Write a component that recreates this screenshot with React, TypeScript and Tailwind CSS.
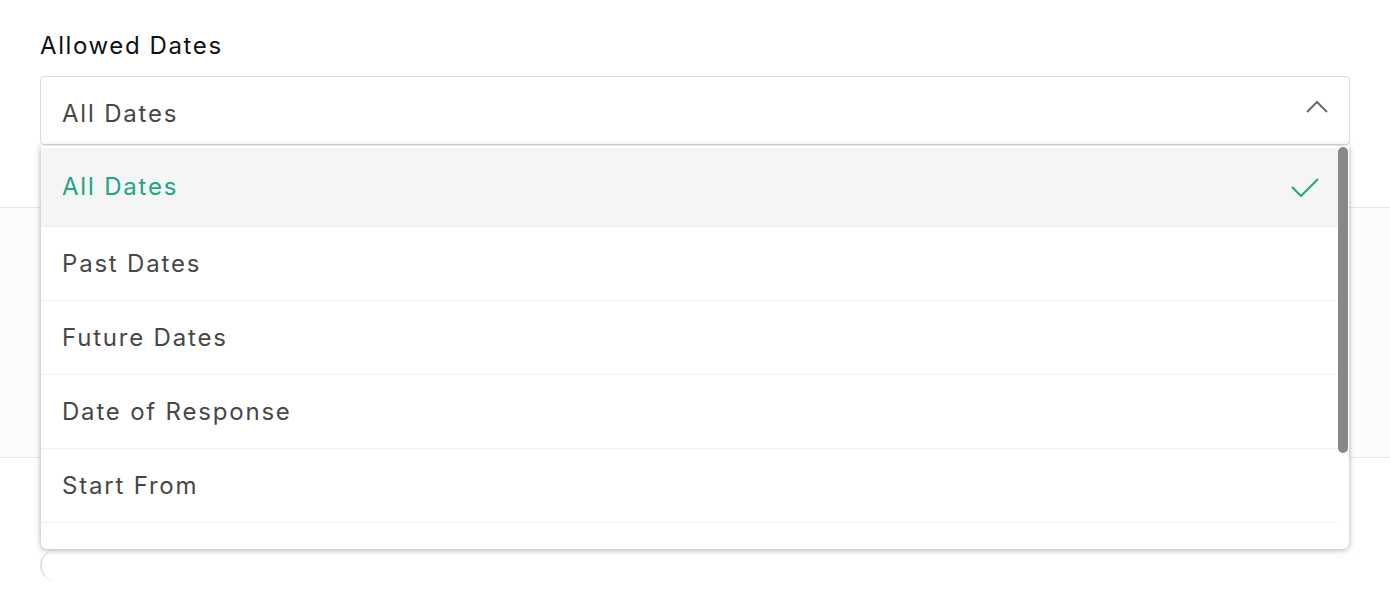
import React from "react";

const options = ["All Dates", "Past Dates", "Future Dates", "Date of Response", "Start From", ""];

export default function App() {
  const selected = "All Dates";

  return (
    <div className="relative min-h-[600px] overflow-hidden bg-white font-['Inter','Noto_Sans',sans-serif] tracking-[1.6px]">
      <div className="px-10 pt-[30px]">
        <label className="block text-[24px] leading-[32px] text-[#111]">Allowed Dates</label>

        <div className="relative z-10 mt-[14px] flex h-[69px] items-center justify-between rounded-[4px] border border-[#dcdcdc] bg-white pl-[21px] pr-[21px]">
          <span className="mt-[6px] text-[24px] tracking-[1.8px] text-[#474747]">All Dates</span>
          <svg className="mb-[8px]" width="22" height="13" viewBox="0 0 22 13" fill="none">
            <polyline points="1,12 11,2 21,12" stroke="#6b6b6b" strokeWidth="2" />
          </svg>

          {/* open menu */}
          <div className="absolute left-[0px] right-[0px] top-[69px] h-[403px] overflow-hidden rounded-b-[6px] bg-white shadow-[0_1px_6px_rgba(0,0,0,0.32)]">
            <div className="mr-[11px] pt-[2px]">
              {options.map((opt, i) => {
                const active = opt === selected;
                return (
                  <div
                    key={i}
                    className={
                      active
                        ? "flex h-[78px] items-center justify-between bg-[#f5f5f5] pl-[21px] pr-[19px]"
                        : "flex h-[74px] items-center border-t border-[#f0f0f0] pl-[21px]"
                    }
                  >
                    <span
                      className={
                        active
                          ? "text-[24px] tracking-[1.8px] text-[#20a585]"
                          : "text-[24px] tracking-[1.8px] text-[#474747]"
                      }
                    >
                      {opt}
                    </span>
                    {active && (
                      <svg width="28" height="20" viewBox="0 0 28 20" fill="none">
                        <polyline points="1,10 10,19 27,2" stroke="#20a585" strokeWidth="2" />
                      </svg>
                    )}
                  </div>
                );
              })}
            </div>
            <div className="absolute right-[1px] top-[1px] h-[306px] w-[10px] rounded-full bg-[#888888]" />
          </div>
        </div>
      </div>

      <div className="mt-[62px] h-[251px] border-y border-[#e8e8e8] bg-[#fcfcfc]" />

      <div className="px-10 pt-[92px]">
        <div className="h-[31px] w-[31px] rounded-full border-l-2 border-[#e0e0e0]" />
      </div>
    </div>
  );
}
